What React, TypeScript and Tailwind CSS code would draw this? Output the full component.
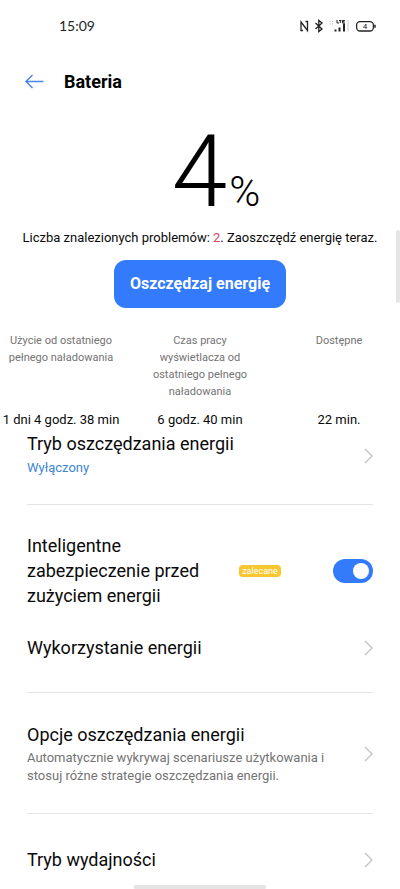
import type { ReactNode } from "react";
import { useState } from "react";

const stats = [
  { label: "Użycie od ostatniego pełnego naładowania", value: "1 dni 4 godz. 38 min" },
  { label: "Czas pracy wyświetlacza od ostatniego pełnego naładowania", value: "6 godz. 40 min" },
  { label: "Dostępne", value: "22 min." },
];

function StatusBar() {
  return (
    <div className="flex h-13 items-center justify-between pr-6 pl-[59px]">
      <span className="font-['Lato',sans-serif] text-sm text-neutral-800">15:09</span>
      <svg width="76" height="16" viewBox="0 0 76 16" fill="none" stroke="#222" aria-hidden="true">
        <path d="M3 12.500H1V4l6.500 8.500V3.500h-2" strokeWidth="1.300" />
        <path d="M15.500 5l6.500 6-3.200 2.600V2.400L22 5l-6.500 6" strokeWidth="1.300" />
        <path d="M29.500 3.500h1M32 3.500h1M29.500 6h1M32 6h1" stroke="#bbb" />
        <path d="M35.500 13.500v-2M39.500 13.500v-4M44 13.500V5.500" strokeWidth="2" />
        <path d="M37 2v3h2M39 2.500h2.500M40.300 2.500V5M44.800 2.500h-2.300V5h2.300M42.500 3.700h2" strokeWidth="1" />
        <path d="M48 2.500v11" stroke="#ccc" />
        <rect x="56.600" y="3.600" width="16.800" height="9.400" rx="3.500" strokeWidth="1.300" />
        <path d="M75 6.800v3" strokeWidth="1.500" />
        <text x="65" y="11.200" textAnchor="middle" fontSize="8" fontFamily="Roboto, sans-serif" fill="#222" stroke="none">
          4
        </text>
      </svg>
    </div>
  );
}

function Chevron() {
  return (
    <svg width="9" height="16" viewBox="0 0 9 16" fill="none" className="shrink-0" aria-hidden="true">
      <path d="M1 1l7 7-7 7" stroke="#c4c4c4" strokeWidth="1.400" />
    </svg>
  );
}

function LinkRow({ title, children, className }: { title: string; children?: ReactNode; className: string }) {
  return (
    <a href="#" className={`flex items-center justify-between gap-6 ${className}`}>
      <div>
        <h2 className="text-lg leading-6">{title}</h2>
        {children}
      </div>
      <Chevron />
    </a>
  );
}

export default function App() {
  const [smart, setSmart] = useState(true);

  return (
    <div className="relative h-screen overflow-hidden bg-white font-['Roboto',sans-serif] text-neutral-950">
      <StatusBar />
      <header className="flex h-15 items-center gap-5 px-6">
        <button type="button" aria-label="Wstecz">
          <svg width="20" height="16" viewBox="0 0 20 16" fill="none" stroke="#4a86e8" strokeWidth="1.500">
            <path d="M19.500 7.500H2M8.500 1L2 7.500 8.500 14" />
          </svg>
        </button>
        <h1 className="text-lg leading-6 font-bold text-black">Bateria</h1>
      </header>

      <main>
        <section className="flex flex-col items-center pt-6">
          <p className="flex items-baseline gap-0.5 pl-8 leading-18 font-light text-black">
            <span className="text-[100px]">4</span>
            <span className="text-[42px]">%</span>
          </p>
          <p className="text-[13px] leading-5">
            Liczba znalezionych problemów: <span className="text-[#d8455a]">2</span>. Zaoszczędź energię teraz.
          </p>
          <button type="button" className="mt-3 h-12 rounded-xl bg-[#347bfb] px-4 text-base font-bold text-white">
            Oszczędzaj energię
          </button>
        </section>

        <dl className="mt-6 grid grid-cols-[122px_1fr_122px] text-center">
          {stats.map((stat) => (
            <div key={stat.label} className="flex flex-col justify-between">
              <dt className="mx-auto max-w-28 text-[11px] leading-[17px] text-neutral-500">{stat.label}</dt>
              <dd className="mt-2 text-[13px] leading-6 whitespace-nowrap">{stat.value}</dd>
            </div>
          ))}
        </dl>

        <div className="px-[27px]">
          <LinkRow title="Tryb oszczędzania energii" className="pb-6">
            <p className="text-[13px] leading-6 text-[#3d86d0]">Wyłączony</p>
          </LinkRow>
          <div className="flex items-center justify-between border-t border-neutral-200 pt-7">
            <label htmlFor="smart" className="w-45 text-lg leading-[25px]">
              Inteligentne zabezpieczenie przed zużyciem energii
            </label>
            <span className="mr-5 rounded-sm bg-[#f7c72f] px-[3px] text-[9px] leading-3 text-white">zalecane</span>
            <input
              id="smart"
              type="checkbox"
              role="switch"
              checked={smart}
              onChange={(e) => setSmart(e.target.checked)}
              className="h-6 w-10 appearance-none rounded-full bg-neutral-300 p-1 before:block before:size-4 before:rounded-full before:bg-white checked:bg-[#347bfb] checked:before:ml-4"
            />
          </div>
          <LinkRow title="Wykorzystanie energii" className="border-b border-neutral-200 pt-7 pb-8" />
          <LinkRow title="Opcje oszczędzania energii" className="border-b border-neutral-200 pt-[30px] pb-7">
            <p className="mt-0.5 text-[13px] leading-[18px] text-neutral-500">
              Automatycznie wykrywaj scenariusze użytkowania i stosuj różne strategie oszczędzania energii.
            </p>
          </LinkRow>
          <LinkRow title="Tryb wydajności" className="pt-[34px] pb-8" />
        </div>
      </main>

      <div className="absolute top-[230px] right-0 h-[73px] w-1 rounded-full bg-neutral-200" />
      <div className="absolute bottom-0 left-1/2 h-1 w-1/3 -translate-x-1/2 rounded-full bg-neutral-200" />
    </div>
  );
}
